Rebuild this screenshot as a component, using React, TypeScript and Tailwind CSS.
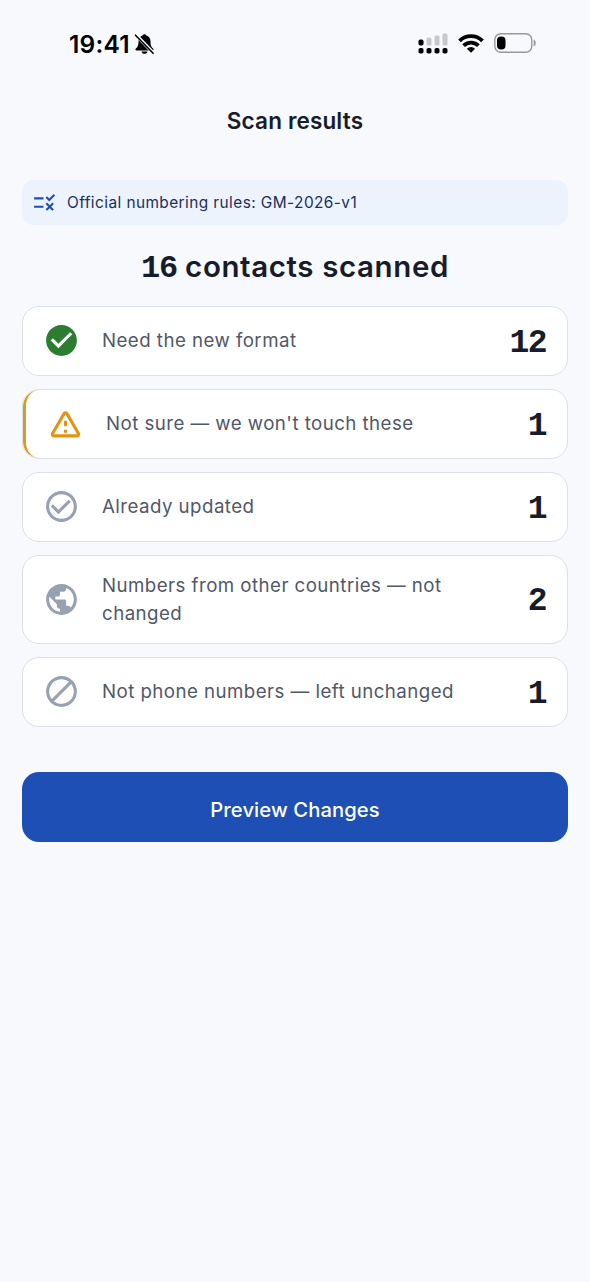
import type { ReactNode } from 'react';
import {
  MdCheckCircle,
  MdCheckCircleOutline,
  MdDoNotDisturbAlt,
  MdPublic,
  MdRule,
} from 'react-icons/md';

interface ResultRowProps {
  icon: ReactNode;
  label: string;
  count: number;
  highlighted?: boolean;
}

function WarningIcon() {
  return (
    <svg viewBox="0 0 24 24" fill="currentColor" className="mb-0.5 size-[37px] text-[#e3930f]">
      <path d="M12 5.99L19.53 19H4.47L12 5.99M2.74 18c-.77 1.33.19 3 1.73 3h15.06c1.54 0 2.5-1.67 1.73-3L13.73 4.99c-.77-1.33-2.69-1.33-3.46 0L2.74 18zM11 11v2c0 .55.45 1 1 1s1-.45 1-1v-2c0-.55-.45-1-1-1s-1 .45-1 1zm0 5h2v2h-2z" />
    </svg>
  );
}

function StatusBar() {
  return (
    <div className="flex h-[87px] items-center justify-between pr-[54px] pl-[69px] text-black">
      <div className="flex items-center gap-1">
        <span className="text-[24.5px] leading-7 font-semibold tracking-[0.2px]">19:41</span>
        {/* Muted bell */}
        <svg width="21" height="22" viewBox="0 0 20 22">
          <path
            d="M10 1.2c-.9 0-1.6.6-1.8 1.4C5.5 3.4 4 5.6 4 8.4c0 4.2-1 5.6-2.6 7.1-.9.9-.4 1.9.6 1.9h16c1 0 1.5-1 .6-1.9C17 14 16 12.6 16 8.4c0-2.8-1.5-5-4.2-5.8-.2-.8-.9-1.4-1.8-1.4zM7 18.4h6c-.3 1.5-1.5 2.4-3 2.4s-2.7-.9-3-2.4z"
            fill="currentColor"
          />
          <path d="M1.5 1.8 18.8 20" stroke="#f7f9fc" strokeWidth="3.4" />
          <path d="M1 2.2 18.6 20.3" stroke="currentColor" strokeWidth="1.6" strokeLinecap="round" />
        </svg>
      </div>

      <div className="flex items-center gap-2.5 pb-px">
        {/* Signal */}
        <svg width="30" height="21" viewBox="0 0 30 21">
          <g fill="#c8c9cc">
            <rect x="8.5" y="4.5" width="5" height="8" rx="1.5" />
            <rect x="16.5" y="2.5" width="5" height="10" rx="1.5" />
            <rect x="24.5" y="0.5" width="5" height="12" rx="1.5" />
          </g>
          <rect x="0.5" y="6.5" width="5" height="6" rx="1.8" />
          <rect x="0.5" y="15" width="5" height="5.5" rx="1.8" />
          <rect x="8.5" y="15" width="5" height="5.5" rx="1.8" />
          <rect x="16.5" y="15" width="5" height="5.5" rx="1.8" />
          <rect x="24.5" y="15" width="5" height="5.5" rx="1.8" />
        </svg>
        {/* Wifi */}
        <svg width="26" height="19" viewBox="0 0 26 19">
          <g fill="none" stroke="currentColor" strokeWidth="3.8">
            <path d="M1.5 6.8a16.3 16.3 0 0 1 23 0" />
            <path d="M5.6 11.7a10.4 10.4 0 0 1 14.8 0" />
          </g>
          <path d="M13 18.7 8.9 14.7a5.9 5.9 0 0 1 8.2 0z" fill="currentColor" />
        </svg>
        {/* Battery */}
        <svg width="42" height="20" viewBox="0 0 42 20">
          <rect x="0.8" y="0.8" width="37" height="18.4" rx="6" fill="none" stroke="#98999c" strokeWidth="1.4" />
          <rect x="3" y="3.5" width="8.5" height="13" rx="4" />
          <path d="M39.7 6.5c1.3.5 2 1.9 2 3.5s-.7 3-2 3.5z" fill="#98999c" />
        </svg>
      </div>
    </div>
  );
}

function ResultRow({ icon, label, count, highlighted }: ResultRowProps) {
  return (
    <div className="flex min-h-[70px] overflow-hidden rounded-[17px] border border-[#dce0e8] bg-white">
      <div
        className={`flex flex-1 items-center pr-[21px] ${
          highlighted ? 'rounded-l-[16px] border-l-[3px] border-[#dd9a21] pl-[21px]' : 'pl-[20px]'
        }`}
      >
        {icon}
        <p className="ml-[22px] w-[370px] py-[15.5px] text-[18.7px] leading-7 tracking-[0.45px] text-[#505869]">
          {label}
        </p>
        <span className="ml-auto pt-[5px] font-['Liberation_Mono',monospace] text-[33px] leading-9 font-bold tracking-[-1.6px] text-[#171c2a]">
          {count}
        </span>
      </div>
    </div>
  );
}

export default function App() {
  return (
    <div className="min-h-[1282px] w-[590px] bg-[#f7f9fc] font-[Inter,sans-serif]">
      <StatusBar />

      <header className="flex h-[68px] items-center justify-center">
        <h1 className="text-[22.5px] font-semibold tracking-[0.15px] text-[#171c2a]">Scan results</h1>
      </header>

      <main className="px-[22px] pt-[25px]">
        {/* Ruleset banner */}
        <div className="flex h-[45px] items-center gap-[10px] rounded-xl bg-[#edf3fc] px-[10px]">
          <MdRule className="size-[25px] text-[#1e4fb4]" />
          <span className="text-[15.4px] tracking-[0.43px] text-[#1a2f5c]">
            Official numbering rules: GM-2026-v1
          </span>
        </div>

        <h2 className="mt-[21px] text-center text-[29.5px] leading-10 font-semibold tracking-[0.6px] whitespace-nowrap text-[#171c2a]">
          <span className="font-['Liberation_Mono',monospace] text-[32px] leading-none font-bold tracking-[-1.2px]">
            16
          </span>{' '}
          contacts scanned
        </h2>

        <div className="mt-[20px] flex flex-col gap-[13px]">
          <ResultRow
            icon={<MdCheckCircle className="mb-0.5 size-[37px] text-[#2c7d32]" />}
            label="Need the new format"
            count={12}
          />
          <ResultRow icon={<WarningIcon />} label="Not sure — we won't touch these" count={1} highlighted />
          <ResultRow
            icon={<MdCheckCircleOutline className="mb-0.5 size-[37px] text-[#97a1b1]" />}
            label="Already updated"
            count={1}
          />
          <ResultRow
            icon={<MdPublic className="size-[37px] text-[#97a1b1]" />}
            label="Numbers from other countries — not changed"
            count={2}
          />
          <ResultRow
            icon={<MdDoNotDisturbAlt className="mb-0.5 size-[37px] text-[#97a1b1]" />}
            label="Not phone numbers — left unchanged"
            count={1}
          />
        </div>

        <button className="mt-[45px] flex h-[70px] w-full items-center justify-center rounded-[17px] bg-[#1e4fb4] pt-[6px] text-[20.2px] font-medium tracking-[0.1px] text-white">
          Preview Changes
        </button>
      </main>
    </div>
  );
}
